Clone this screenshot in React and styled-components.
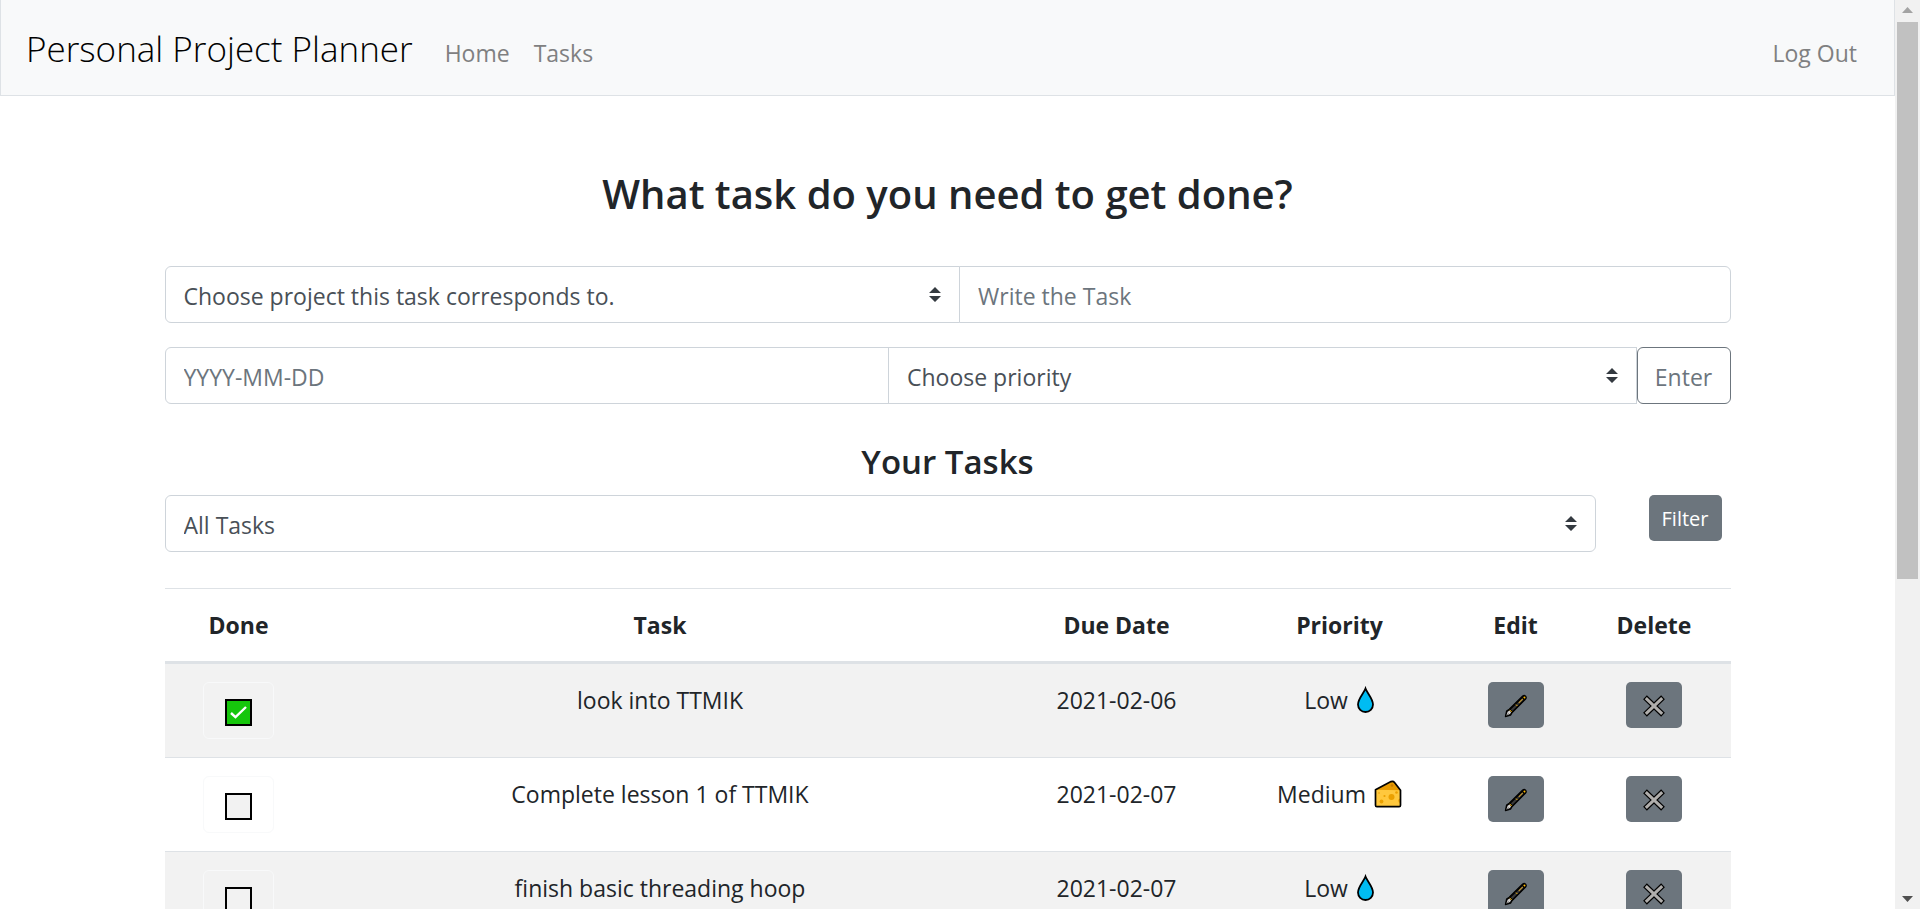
import React from 'react';
import styled, { createGlobalStyle, css } from 'styled-components';

const GlobalStyle = createGlobalStyle`
  *, *::before, *::after { box-sizing: border-box; }
  body {
    margin: 0;
    background: #fff;
    color: #212529;
    font-family: 'Open Sans', 'Noto Sans', sans-serif;
    font-size: 23px;
    line-height: 36px;
  }
  button, input, select { font: inherit; }
`;

const Shell = styled.div`
  display: flex;
  height: 100vh;
`;

const Page = styled.div`
  flex: 1;
  min-width: 0;
  overflow-y: auto;
  scrollbar-width: none;
`;

const Navbar = styled.nav`
  display: flex;
  align-items: baseline;
  height: 96px;
  padding: 22px 25px 0;
  background: #f8f9fa;
  border: 1px solid #dee2e6;
  border-top: 0;
`;

const Brand = styled.a`
  margin-right: 20px;
  color: #000;
  font-size: 35px;
  font-weight: 300;
  line-height: 54px;
  text-decoration: none;
`;

const NavLink = styled.a`
  padding: 0 12px;
  color: #7f8081;
  text-decoration: none;
  &:last-child { margin-left: auto; }
`;

const Main = styled.main`
  max-width: 1710px;
  margin: 0 auto;
  padding: 73px 72px 0;
`;

const Title = styled.h1`
  margin: 0 0 47px;
  font-size: 40px;
  font-weight: 600;
  line-height: 50px;
  text-align: center;
`;

const Subtitle = styled.h2`
  margin: 36px 0 11px;
  font-size: 33px;
  font-weight: 600;
  line-height: 44px;
  text-align: center;
`;

const FormRow = styled.div`
  display: flex;
  margin-top: 24px;
`;

const corners = {
  left: '6px 0 0 6px',
  right: '0 6px 6px 0',
  none: '0',
  all: '6px',
};

const field = css`
  width: 100%;
  height: 57px;
  padding: 2px 18px 0;
  background: #fff;
  border: 1px solid #ced4da;
  border-radius: ${(p) => corners[p.$round]};
  color: #495057;
`;

const Field = styled.input`
  ${field}
  flex: 1 1 0;
  min-width: 0;
  margin-left: ${(p) => (p.$joined ? '-1px' : '0')};
  &::placeholder { color: #6c757d; opacity: 1; }
`;

const SelectWrap = styled.div`
  position: relative;
  flex: 1 1 62px;
  min-width: 0;
  margin-left: ${(p) => (p.$joined ? '-1px' : '0')};
`;

const SelectBox = styled.select`
  ${field}
  appearance: none;
`;

const Caret = styled.svg`
  position: absolute;
  top: 21px;
  right: 19px;
  pointer-events: none;
`;

const EnterButton = styled.button`
  width: 94px;
  height: 57px;
  padding: 2px 0 0;
  background: transparent;
  border: 1px solid #6c757d;
  border-radius: 6px;
  color: #6c757d;
`;

const FilterRow = styled.div`
  display: flex;
  align-items: flex-start;
  padding-right: 9px;
`;

const SolidButton = styled.button`
  display: inline-flex;
  align-items: center;
  justify-content: center;
  width: ${(p) => (p.$wide ? '73px' : '56px')};
  height: 46px;
  margin-left: ${(p) => (p.$wide ? '53px' : '0')};
  padding: 2px 0 0;
  background: #6c757d;
  border: 0;
  border-radius: 5px;
  color: #fff;
  font-size: 20px;
  vertical-align: top;
`;

const Table = styled.table`
  width: 100%;
  margin-top: 36px;
  border-collapse: separate;
  border-spacing: 0;
  table-layout: fixed;
  text-align: center;
`;

const Col = styled.col`
  width: ${(p) => p.$w};
`;

const HeadCell = styled.th`
  padding: 18px;
  border-top: 1px solid #dee2e6;
  border-bottom: 3px solid #dee2e6;
  font-weight: 700;
`;

const Row = styled.tr`
  background: ${(p) => (p.$striped ? '#f2f2f2' : '#fff')};
`;

const Cell = styled.td`
  height: 94px;
  padding: 18px 0;
  border-bottom: 1px solid #dee2e6;
  vertical-align: top;
`;

const Toggle = styled.label`
  display: inline-grid;
  place-items: center;
  width: 71px;
  height: 57px;
  padding-top: 4px;
  border: 1px solid #f8f9fa;
  border-radius: 6px;
  vertical-align: top;
  & > * { grid-area: 1 / 1; }
`;

const Tick = styled.input`
  appearance: none;
  width: 27px;
  height: 27px;
  margin: 0;
  background: #f2f2f2;
  border: 2px solid #000;
  &:checked { background: #16c60c; }
`;

const TickMark = styled.svg`
  pointer-events: none;
`;

const Priority = styled.span`
  display: inline-flex;
  align-items: center;
  gap: 8px;
`;

const Scrollbar = styled.div`
  display: flex;
  flex-direction: column;
  align-items: center;
  width: 25px;
  height: 100%;
  background: #f1f1f1;
`;

const ScrollArrow = styled.svg`
  flex: none;
  display: block;
`;

const ScrollTrack = styled.div`
  flex: 1;
  width: 21px;
`;

const ScrollThumb = styled.div`
  height: 64.4%;
  background: #c1c1c1;
`;

function Select({ label, round, joined, children }) {
  return (
    <SelectWrap $joined={joined}>
      <SelectBox aria-label={label} $round={round}>{children}</SelectBox>
      <Caret width="12" height="15" viewBox="0 0 4 5" aria-hidden="true">
        <path fill="#343a40" d="M2 0L0 2h4zm0 5L0 3h4z" />
      </Caret>
    </SelectWrap>
  );
}

const DropIcon = () => (
  <svg width="19" height="28" viewBox="0 0 19 28" aria-hidden="true">
    <path d="M9.500 2.500C7.800 7.300 2 12.600 2 18.500a7.500 7.500 0 0 0 15 0C17 12.600 11.200 7.300 9.500 2.500z" fill="#00bcf2" stroke="#000" strokeWidth="1.800" strokeLinejoin="miter" />
  </svg>
);

const CheeseIcon = () => (
  <svg width="28" height="28" viewBox="0 0 28 28" aria-hidden="true">
    <path d="M1.500 9.500L17 1.600q2.200-.9 3.500.8l6 7.800v15q0 1.400-1.400 1.400H2.900q-1.400 0-1.400-1.400z" fill="#ffc83d" />
    <path d="M1.500 9.800L17 1.600q2.200-.9 3.500.8l6 7.800z" fill="#e69a00" />
    <circle cx="17.500" cy="17" r="3" fill="#eba000" />
    <circle cx="7.500" cy="21.500" r="1.900" fill="#eba000" />
    <circle cx="10.500" cy="16" r="1.100" fill="#eba000" />
    <circle cx="22.500" cy="12.500" r="1.300" fill="#eba000" />
    <circle cx="5" cy="13" r=".8" fill="#eba000" />
    <path d="M26.500 18.500a2.200 2.200 0 0 0 0 4.400z" fill="#eba000" />
    <circle cx="18" cy="5.500" r="1.300" fill="#c97c00" />
    <path d="M1.500 9.800L17 1.600q2.200-.9 3.500.8l6 7.800v15q0 1.400-1.400 1.400H2.900q-1.400 0-1.400-1.400z" fill="none" stroke="#000" strokeWidth="1.700" strokeLinejoin="round" />
  </svg>
);

const PenIcon = () => (
  <svg width="24" height="24" viewBox="0 0 24 24" aria-hidden="true">
    <path d="M1.400 22.600l1.200-5.600 2.600-1.800L18.700 2q1.500-1.100 2.900.1 1.200 1.500.1 2.900L8.200 18.500l-1.600 2.600z" fill="#000" stroke="#000" strokeWidth="1.200" strokeLinejoin="round" />
    <path d="M6.800 15.500L18.200 4.500l1.300 1.300L8.300 17z" fill="#3b3a39" />
    <path d="M3.600 17.700l1.900-1.200 1.600 1.700-1.100 1.900-3.600 1.400z" fill="#d2d0ce" />
    <path d="M2.800 21.200l1.900-2" stroke="#767676" strokeWidth=".8" />
    <path d="M5.700 15.900l2 2M12 10.600l1.400 1.400" stroke="#ffb900" strokeWidth="1" />
    <path d="M14.800 8.900l4-4" stroke="#c99a2e" strokeWidth="1.100" />
    <path d="M19.800 2.700q.8-.5 1.400.1.500.7 0 1.400l-.6.500-1.400-1.400z" fill="#ffb900" />
  </svg>
);

const CrossIcon = () => (
  <svg width="24" height="24" viewBox="0 0 24 24" aria-hidden="true">
    <path d="M3 3.300l18 17.400M21 3.300L3 20.700" stroke="#000" strokeWidth="5.400" />
    <path d="M3.800 4.100l16.400 15.800M20.200 4.100L3.800 19.900" stroke="#b0aeac" strokeWidth="3" />
  </svg>
);

const tasks = [
  { name: 'look into TTMIK', due: '2021-02-06', priority: 'Low', done: true },
  { name: 'Complete lesson 1 of TTMIK', due: '2021-02-07', priority: 'Medium', done: false },
  { name: 'finish basic threading hoop', due: '2021-02-07', priority: 'Low', done: false },
];

const priorityIcons = { Low: DropIcon, Medium: CheeseIcon };

function TaskRow({ task, striped }) {
  const Icon = priorityIcons[task.priority];
  return (
    <Row $striped={striped}>
      <Cell>
        <Toggle>
          <Tick type="checkbox" defaultChecked={task.done} aria-label={`Done: ${task.name}`} />
          {task.done && (
            <TickMark width="19" height="15" viewBox="0 0 19 15" aria-hidden="true">
              <path d="M2 8l4.500 4.200L17 2" fill="none" stroke="#fff" strokeWidth="2.400" />
            </TickMark>
          )}
        </Toggle>
      </Cell>
      <Cell>{task.name}</Cell>
      <Cell>{task.due}</Cell>
      <Cell><Priority>{task.priority}<Icon /></Priority></Cell>
      <Cell><SolidButton type="button" aria-label={`Edit ${task.name}`}><PenIcon /></SolidButton></Cell>
      <Cell><SolidButton type="button" aria-label={`Delete ${task.name}`}><CrossIcon /></SolidButton></Cell>
    </Row>
  );
}

export default function App() {
  return (
    <>
      <GlobalStyle />
      <Shell>
        <Page>
          <Navbar>
            <Brand href="#">Personal Project Planner</Brand>
            <NavLink href="#home">Home</NavLink>
            <NavLink href="#tasks">Tasks</NavLink>
            <NavLink href="#logout">Log Out</NavLink>
          </Navbar>
          <Main>
            <Title>What task do you need to get done?</Title>
            <form onSubmit={(e) => e.preventDefault()}>
              <FormRow>
                <Select label="Project" round="left">
                  <option>Choose project this task corresponds to.</option>
                </Select>
                <Field $round="right" $joined placeholder="Write the Task" aria-label="Task" />
              </FormRow>
              <FormRow>
                <Field $round="left" placeholder="YYYY-MM-DD" aria-label="Due date" />
                <Select label="Priority" round="none" joined>
                  <option>Choose priority</option>
                </Select>
                <EnterButton type="submit">Enter</EnterButton>
              </FormRow>
            </form>
            <Subtitle>Your Tasks</Subtitle>
            <FilterRow>
              <Select label="Filter tasks" round="all">
                <option>All Tasks</option>
              </Select>
              <SolidButton type="button" $wide>Filter</SolidButton>
            </FilterRow>
            <Table>
              <colgroup>
                <Col $w="148px" />
                <Col $w="auto" />
                <Col $w="218px" />
                <Col $w="228px" />
                <Col $w="124px" />
                <Col $w="153px" />
              </colgroup>
              <thead>
                <tr>
                  {['Done', 'Task', 'Due Date', 'Priority', 'Edit', 'Delete'].map((h) => (
                    <HeadCell key={h} scope="col">{h}</HeadCell>
                  ))}
                </tr>
              </thead>
              <tbody>
                {tasks.map((task, i) => (
                  <TaskRow key={task.name} task={task} striped={i % 2 === 0} />
                ))}
              </tbody>
            </Table>
          </Main>
        </Page>
        <Scrollbar aria-hidden="true">
          <ScrollArrow width="25" height="22" viewBox="0 0 25 22">
            <path d="M7 13l5.500-6 5.500 6z" fill="#a3a3a3" />
          </ScrollArrow>
          <ScrollTrack>
            <ScrollThumb />
          </ScrollTrack>
          <ScrollArrow width="25" height="22" viewBox="0 0 25 22">
            <path d="M7 9l5.500 6 5.500-6z" fill="#505050" />
          </ScrollArrow>
        </Scrollbar>
      </Shell>
    </>
  );
}
